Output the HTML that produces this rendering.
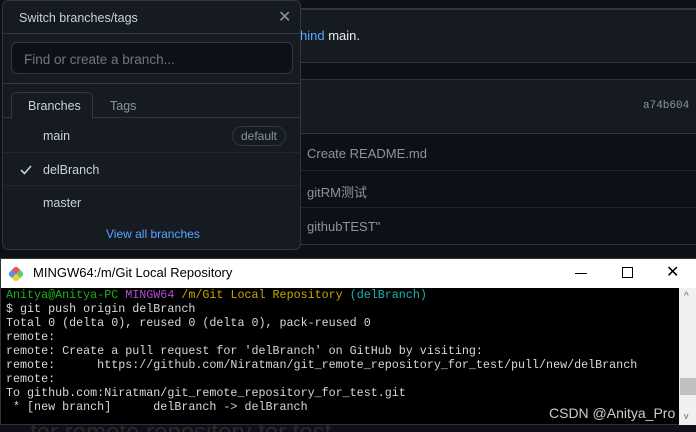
<!DOCTYPE html>
<html><head><meta charset="utf-8"><style>
*{margin:0;padding:0;box-sizing:border-box}
body{width:696px;height:432px;overflow:hidden;background:#0d1117;font-family:"Liberation Sans","Noto Sans CJK SC",sans-serif;position:relative;color:#c9d1d9}
.a{position:absolute}
.box{position:absolute;left:300px;right:-2px;background:#161b22;border:1px solid #30363d}
.t{font-size:13px;color:#c9d1d9}
.pop{position:absolute;left:2px;top:0;width:299px;height:250px;background:#161b22;border:1px solid #30363d;border-radius:6px;font-size:12.5px}
.line{position:absolute;left:0;right:0;height:1px;background:#30363d}
.term{position:absolute;left:0;top:258px;width:696px;height:167px;background:#000;border:1px solid #333}
.tb{position:absolute;left:0;top:0;width:696px;height:29px;background:#fff;color:#000;font-size:13px}
pre{font-family:"Liberation Mono",monospace;font-size:11.7px;line-height:14px;color:#d8d8d8;position:absolute;left:5px;top:29px;letter-spacing:0}
</style></head><body>
<div class="a" style="left:300px;top:8px;width:396px;height:1px;background:#30363d"></div>
<div class="box" style="top:9px;height:54px"></div>
<div class="a t" style="left:300px;top:28px;color:#e6edf3"><span style="color:#58a6ff">hind</span> main.</div>
<div class="box" style="top:79px;height:55px"></div>
<div class="a" style="left:643px;top:100px;font-family:'Liberation Mono',monospace;font-size:11px;color:#8b949e">a74b604</div>
<div class="box" style="top:133px;height:112px;background:#0d1117"></div>
<div class="a" style="left:300px;top:170px;width:396px;height:1px;background:#21262d"></div>
<div class="a" style="left:300px;top:207px;width:396px;height:1px;background:#21262d"></div>
<div class="a t" style="left:307px;top:146px;color:#8b949e">Create README.md</div>
<div class="a t" style="left:307px;top:182px;color:#8b949e">gitRM测试</div>
<div class="a t" style="left:307px;top:219px;color:#8b949e">githubTEST"</div>

<div class="pop">
<div class="a" style="left:16px;top:10px;font-size:12.5px;color:#c9d1d9">Switch branches/tags</div>
<div class="a" style="left:275px;top:6px;font-size:16px;color:#8b949e">✕</div>
<div class="line" style="top:32px"></div>
<div class="a" style="left:8px;top:41px;width:282px;height:32px;background:#0d1117;border:1px solid #30363d;border-radius:6px"></div>
<div class="a" style="left:21px;top:51px;font-size:13.5px;color:#6e7681">Find or create a branch...</div>
<div class="line" style="top:82px"></div>
<div class="line" style="top:116px"></div>
<div class="a" style="left:8px;top:91px;width:82px;height:27px;background:#161b22;border:1px solid #30363d;border-bottom:none;border-radius:6px 6px 0 0"></div>
<div class="a" style="left:25px;top:98px;color:#c9d1d9">Branches</div>
<div class="a" style="left:107px;top:98px;color:#8b949e">Tags</div>
<div class="a" style="left:40px;top:128px">main</div>
<div class="a" style="left:229px;top:125px;width:54px;height:20px;border:1px solid #30363d;border-radius:10px;color:#8b949e;font-size:12px;text-align:center;line-height:18px">default</div>
<div class="line" style="top:151px;background:#21262d"></div>
<svg class="a" style="left:17px;top:164px" width="12" height="10" viewBox="0 0 12 10"><path d="M1 5 L4.5 8.5 L11 1" fill="none" stroke="#c9d1d9" stroke-width="1.6"/></svg>
<div class="a" style="left:40px;top:162px">delBranch</div>
<div class="line" style="top:184px;background:#21262d"></div>
<div class="a" style="left:40px;top:195px">master</div>
<div class="a" style="left:103px;top:226px;color:#58a6ff;font-size:12px">View all branches</div>
</div>

<div class="a" style="left:30px;top:425px;font-size:24px;color:#2a2a2a;line-height:16px;height:7px;overflow:hidden">for remote repository for test</div>
<div class="term">
<div class="tb">
<svg class="a" style="left:8px;top:8px" width="14" height="14" viewBox="0 0 14 14"><rect x="4" y="0" width="6" height="6" transform="rotate(45 7 3)" fill="#e55"/><rect x="0" y="4" width="6" height="6" fill="#5a8ee0" transform="rotate(45 3 7)"/><rect x="8" y="4" width="6" height="6" fill="#6c6" transform="rotate(45 11 7)"/><rect x="4" y="8" width="6" height="6" fill="#ec3" transform="rotate(45 7 11)"/></svg>
<div class="a" style="left:32px;top:6px">MINGW64:/m/Git Local Repository</div>
<div class="a" style="left:574px;top:14px;width:12px;height:1px;background:#000"></div>
<div class="a" style="left:621px;top:8px;width:11px;height:11px;border:1px solid #000"></div>
<div class="a" style="left:665px;top:3px;font-size:16px">✕</div>
</div>
<pre><span style="color:#1db11d">Anitya@Anitya-PC</span> <span style="color:#b34bd0">MINGW64</span> <span style="color:#c7a500">/m/Git Local Repository</span> <span style="color:#1ab3b3">(delBranch)</span>
$ git push origin delBranch
Total 0 (delta 0), reused 0 (delta 0), pack-reused 0
remote:
remote: Create a pull request for 'delBranch' on GitHub by visiting:
remote:      https://github.com/Niratman/git_remote_repository_for_test/pull/new/delBranch
remote:
To github.com:Niratman/git_remote_repository_for_test.git
 * [new branch]      delBranch -> delBranch</pre>
<div class="a" style="left:678px;top:29px;width:18px;height:137px;background:#f0f0f0"></div>
<div class="a" style="left:683px;top:32px;font-size:10px;color:#666">^</div>
<div class="a" style="left:679px;top:119px;width:16px;height:17px;background:#c0c0c0"></div>
<div class="a" style="left:683px;top:152px;font-size:9px;color:#666">v</div>
<div class="a" style="left:548px;top:146px;font-size:14px;color:#ccc">CSDN @Anitya_Pro</div>
</div>
</body></html>
